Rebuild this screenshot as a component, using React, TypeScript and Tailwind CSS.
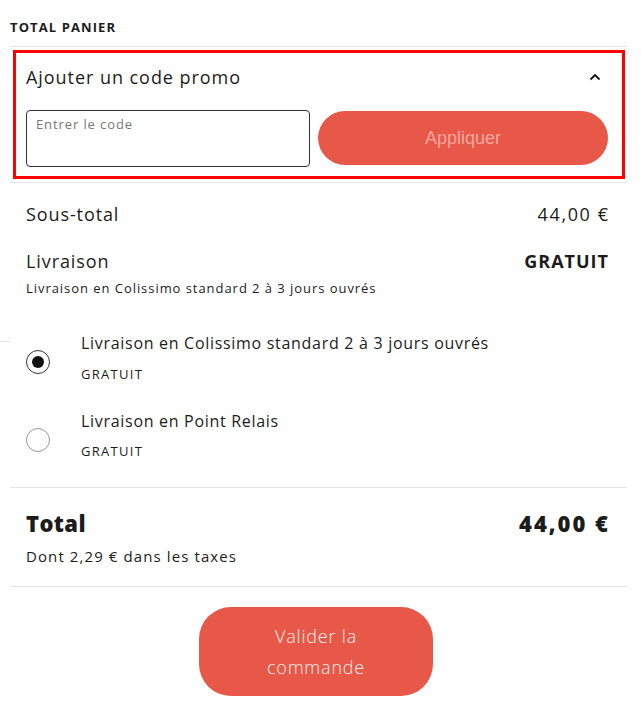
import React from "react";

const shipping = [
  { label: "Livraison en Colissimo standard 2 à 3 jours ouvrés", price: "GRATUIT", checked: true },
  { label: "Livraison en Point Relais", price: "GRATUIT", checked: false },
];

function Radio({ checked }: { checked: boolean }) {
  return (
    <span
      className={
        "mt-[18px] flex h-[24px] w-[24px] shrink-0 items-center justify-center rounded-full border " +
        (checked ? "border-[#333333]" : "border-[#9a9a9a]")
      }
    >
      {checked && <span className="h-[12px] w-[12px] rounded-full bg-[#111111]" />}
    </span>
  );
}

export default function App() {
  return (
    <div className="w-[641px] bg-white pl-[10px] pr-[14px] font-['Open_Sans',sans-serif] text-[#1c1c1c]">
      <h2 className="border-b border-[#e6e6e6] pt-[18px] pb-[10px] text-[13px] font-bold leading-[18px] tracking-[1.1px]">
        TOTAL PANIER
      </h2>

      {/* promo code */}
      <div className="pt-[3px] pb-[3px] pl-[3px] pr-[2px]">
        <div className="border-[3px] border-[#ff0000] pl-[10px] pr-[14px] pb-[9px]">
          <div className="flex items-center justify-between pt-[13px]">
            <span className="text-[18px] leading-[22px] tracking-[0.95px]">Ajouter un code promo</span>
            <svg width="12" height="8" viewBox="0 0 12 8" className="mr-[7px]">
              <path d="M1.5 6.5 L6 2 L10.5 6.5" fill="none" stroke="#111" strokeWidth="1.8" />
            </svg>
          </div>
          <div className="mt-[22px] flex items-start gap-[8px]">
            <div className="h-[57px] w-[284px] shrink-0 rounded-[4px] border border-[#333333] px-[9px] pt-[4px] text-[13px] leading-[18px] tracking-[0.9px] text-[#777777]">
              Entrer le code
            </div>
            <button className="mt-[1px] h-[54px] flex-1 rounded-full bg-[#e85848] font-['Liberation_Sans',sans-serif] text-[18px] text-[#f6a79e]">
              Appliquer
            </button>
          </div>
        </div>
      </div>

      <div className="border-t border-[#e6e6e6] pl-[16px] pr-[19px]">
        <div className="flex justify-between pt-[19px] text-[18px] leading-[24px]">
          <span className="tracking-[0.9px]">Sous-total</span>
          <span className="tracking-[1.6px] -mr-[1.6px]">44,00 €</span>
        </div>
        <div className="mt-[23px] flex justify-between text-[18px] leading-[24px]">
          <span className="tracking-[0.9px]">Livraison</span>
          <span className="font-bold tracking-[1px] -mr-[1px]">GRATUIT</span>
        </div>
        <p className="mt-[6px] text-[13px] leading-[18px] tracking-[0.95px]">
          Livraison en Colissimo standard 2 à 3 jours ouvrés
        </p>
      </div>

      {/* shipping options */}
      <div className="-ml-[10px] flex">
        <div className="mt-[44px] h-px w-[10px] shrink-0 bg-[#e6e6e6]" />
        <div className="flex-1 pl-[16px] pt-[35px] pb-[27px]">
          {shipping.map((s, i) => (
            <div key={s.label} className={"flex gap-[31px] " + (i > 0 ? "mt-[27px]" : "")}>
              <Radio checked={s.checked} />
              <div>
                <p className="text-[16px] leading-[22px] tracking-[0.7px]">{s.label}</p>
                <p className={"text-[13px] leading-[18px] tracking-[1.3px] " + (i > 0 ? "mt-[10px]" : "mt-[11px]")}>
                  {s.price}
                </p>
              </div>
            </div>
          ))}
        </div>
      </div>

      <div className="border-t border-[#e6e6e6] pl-[16px] pr-[19px] pt-[22px] pb-[20px]">
        <div className="flex justify-between text-[22px] font-extrabold leading-[26px]">
          <span className="tracking-[0.4px]">Total</span>
          <span className="tracking-[2px] -mr-[2px]">44,00 €</span>
        </div>
        <p className="mt-[10px] text-[15px] leading-[20px] tracking-[1.1px]">Dont 2,29 € dans les taxes</p>
      </div>

      <div className="flex justify-center border-t border-[#e6e6e6] pt-[20px] pb-[23px] pr-[5px]">
        <button className="flex h-[89px] w-[234px] items-center justify-center rounded-[32px] bg-[#e85848] px-[50px] text-center text-[18px] font-light leading-[31px] tracking-[0.8px] text-[#fdf0ee]">
          Valider la commande
        </button>
      </div>
    </div>
  );
}
